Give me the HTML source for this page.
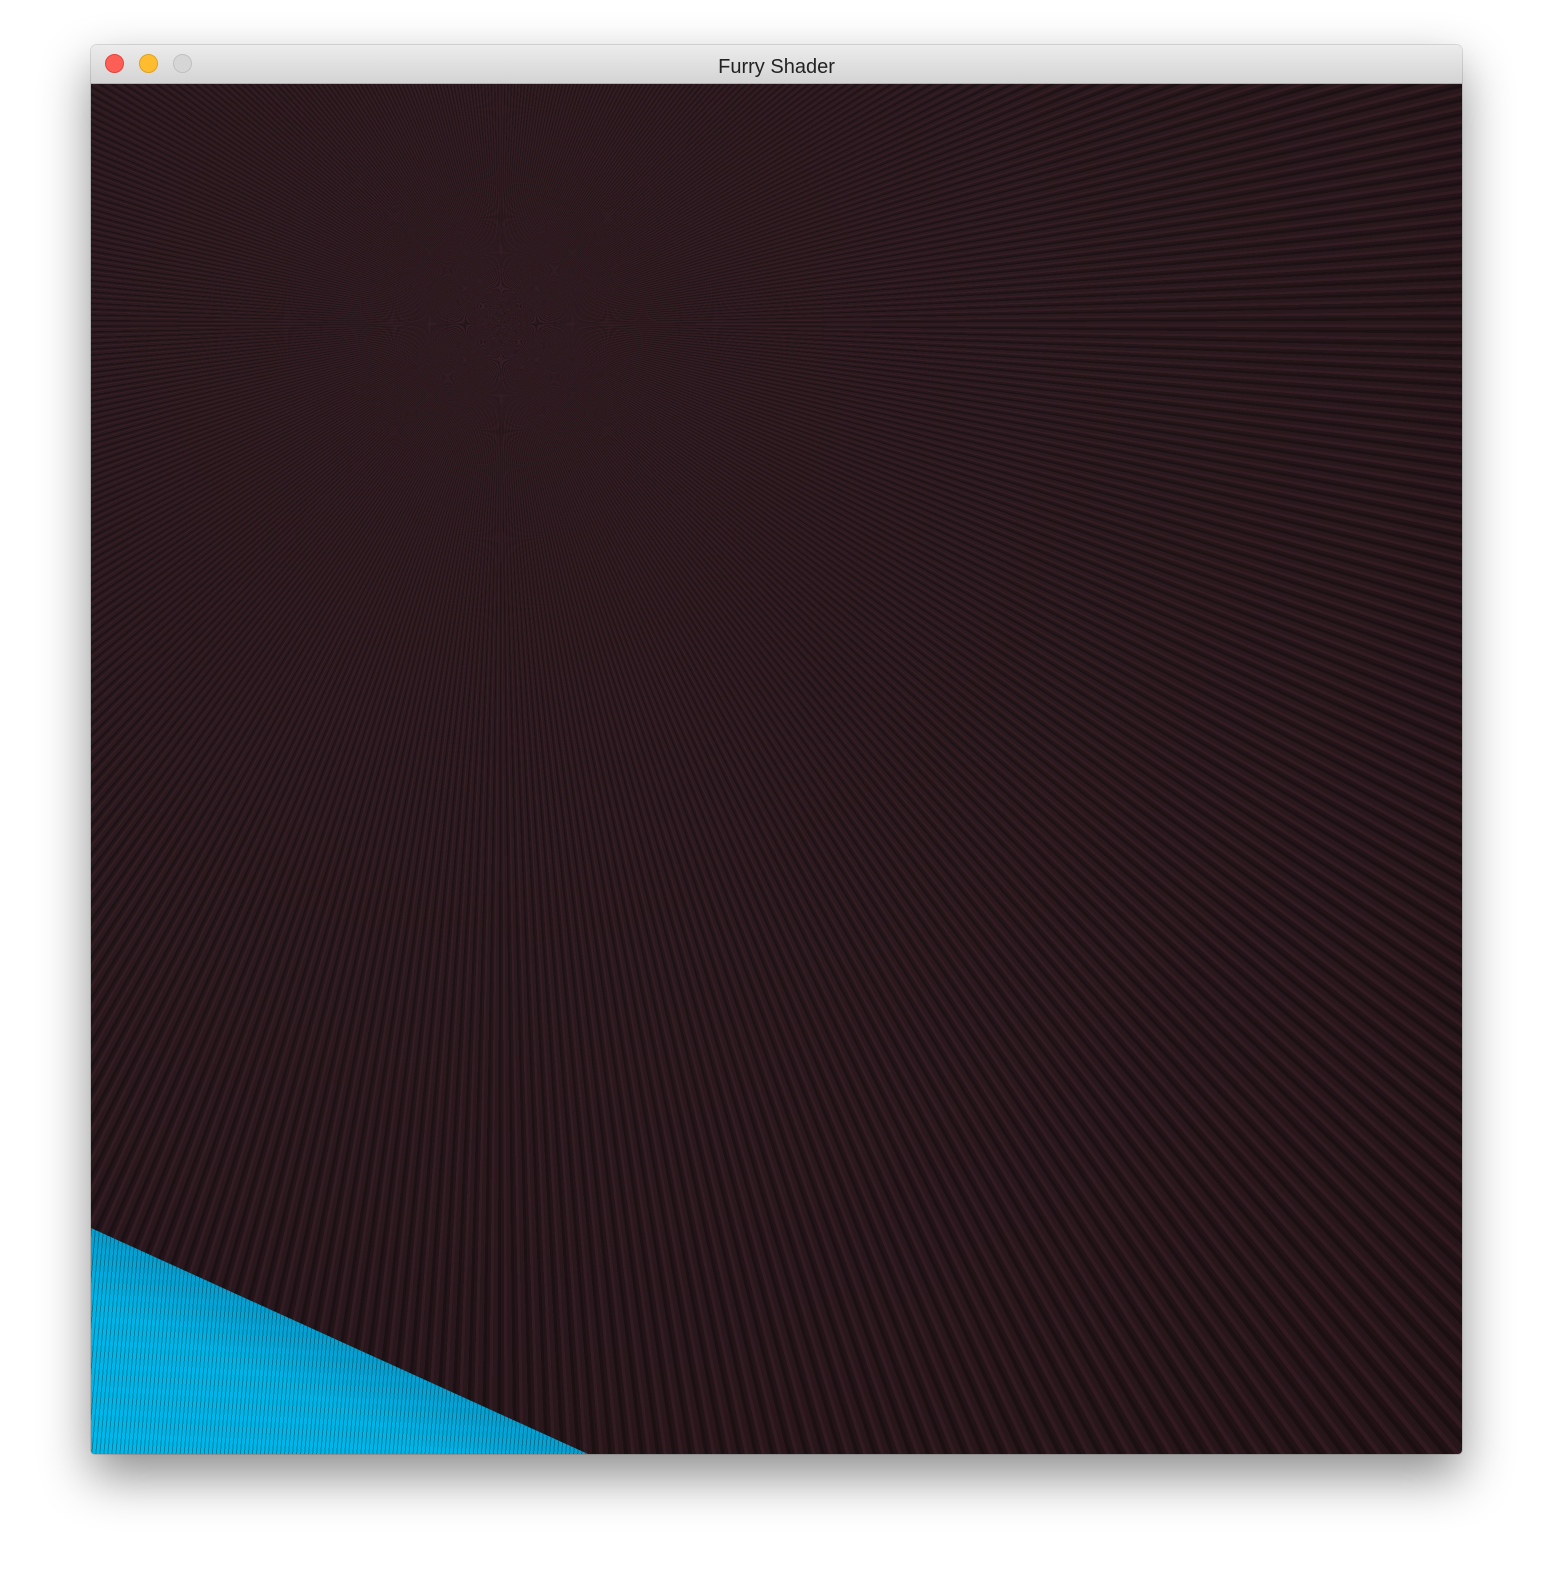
<!DOCTYPE html>
<html><head><meta charset="utf-8"><style>
html,body{margin:0;width:1551px;height:1581px;background:#fff;overflow:hidden}
.win{position:absolute;left:91px;top:45px;width:1371px;height:1409px;border-radius:6px 6px 4px 4px;overflow:hidden;box-shadow:0 22px 50px rgba(0,0,0,.45),0 0 0 1px rgba(0,0,0,.12)}
.title{position:absolute;left:0;top:0;right:0;height:38px;background:linear-gradient(#ececec,#d4d4d4);border-bottom:1px solid #b0b0b0;font:20px "Liberation Sans",sans-serif;color:#222;text-align:center;line-height:44px}
.dot{position:absolute;top:9px;width:19px;height:19px;border-radius:50%;box-sizing:border-box}
.c{position:absolute;left:0;top:39px;right:0;bottom:0;background:
repeating-conic-gradient(from 0deg at 410px 240px,rgba(0,0,0,.3) 0deg .18deg,rgba(0,0,0,0) .18deg .45deg,rgba(70,35,45,.35) .45deg .62deg,rgba(0,0,0,.12) .62deg .8deg),
radial-gradient(circle at 410px 240px,#301c22 0,#2b1a1f 500px,#261519 1400px);}
.blue{position:absolute;left:0;bottom:0;width:497px;height:226px;clip-path:polygon(0 0,100% 100%,0 100%);background:
repeating-linear-gradient(95deg,rgba(0,0,0,.3) 0 1px,rgba(0,0,0,0) 1px 4px),
linear-gradient(204deg,#12222c 0%,#0a5878 22%,#0a90c0 40%,#00b4e6 65%,#00b8ea 100%)}
</style></head><body>
<div class="win">
<div class="title">Furry Shader
<span class="dot" style="left:14px;background:#fd5f57;border:1px solid #e0443e"></span>
<span class="dot" style="left:48px;background:#febc2e;border:1px solid #dea123"></span>
<span class="dot" style="left:82px;background:#d6d6d6;border:1px solid #c0c0c0"></span>
</div>
<div class="c"><div class="blue"></div></div>
</div>
</body></html>
